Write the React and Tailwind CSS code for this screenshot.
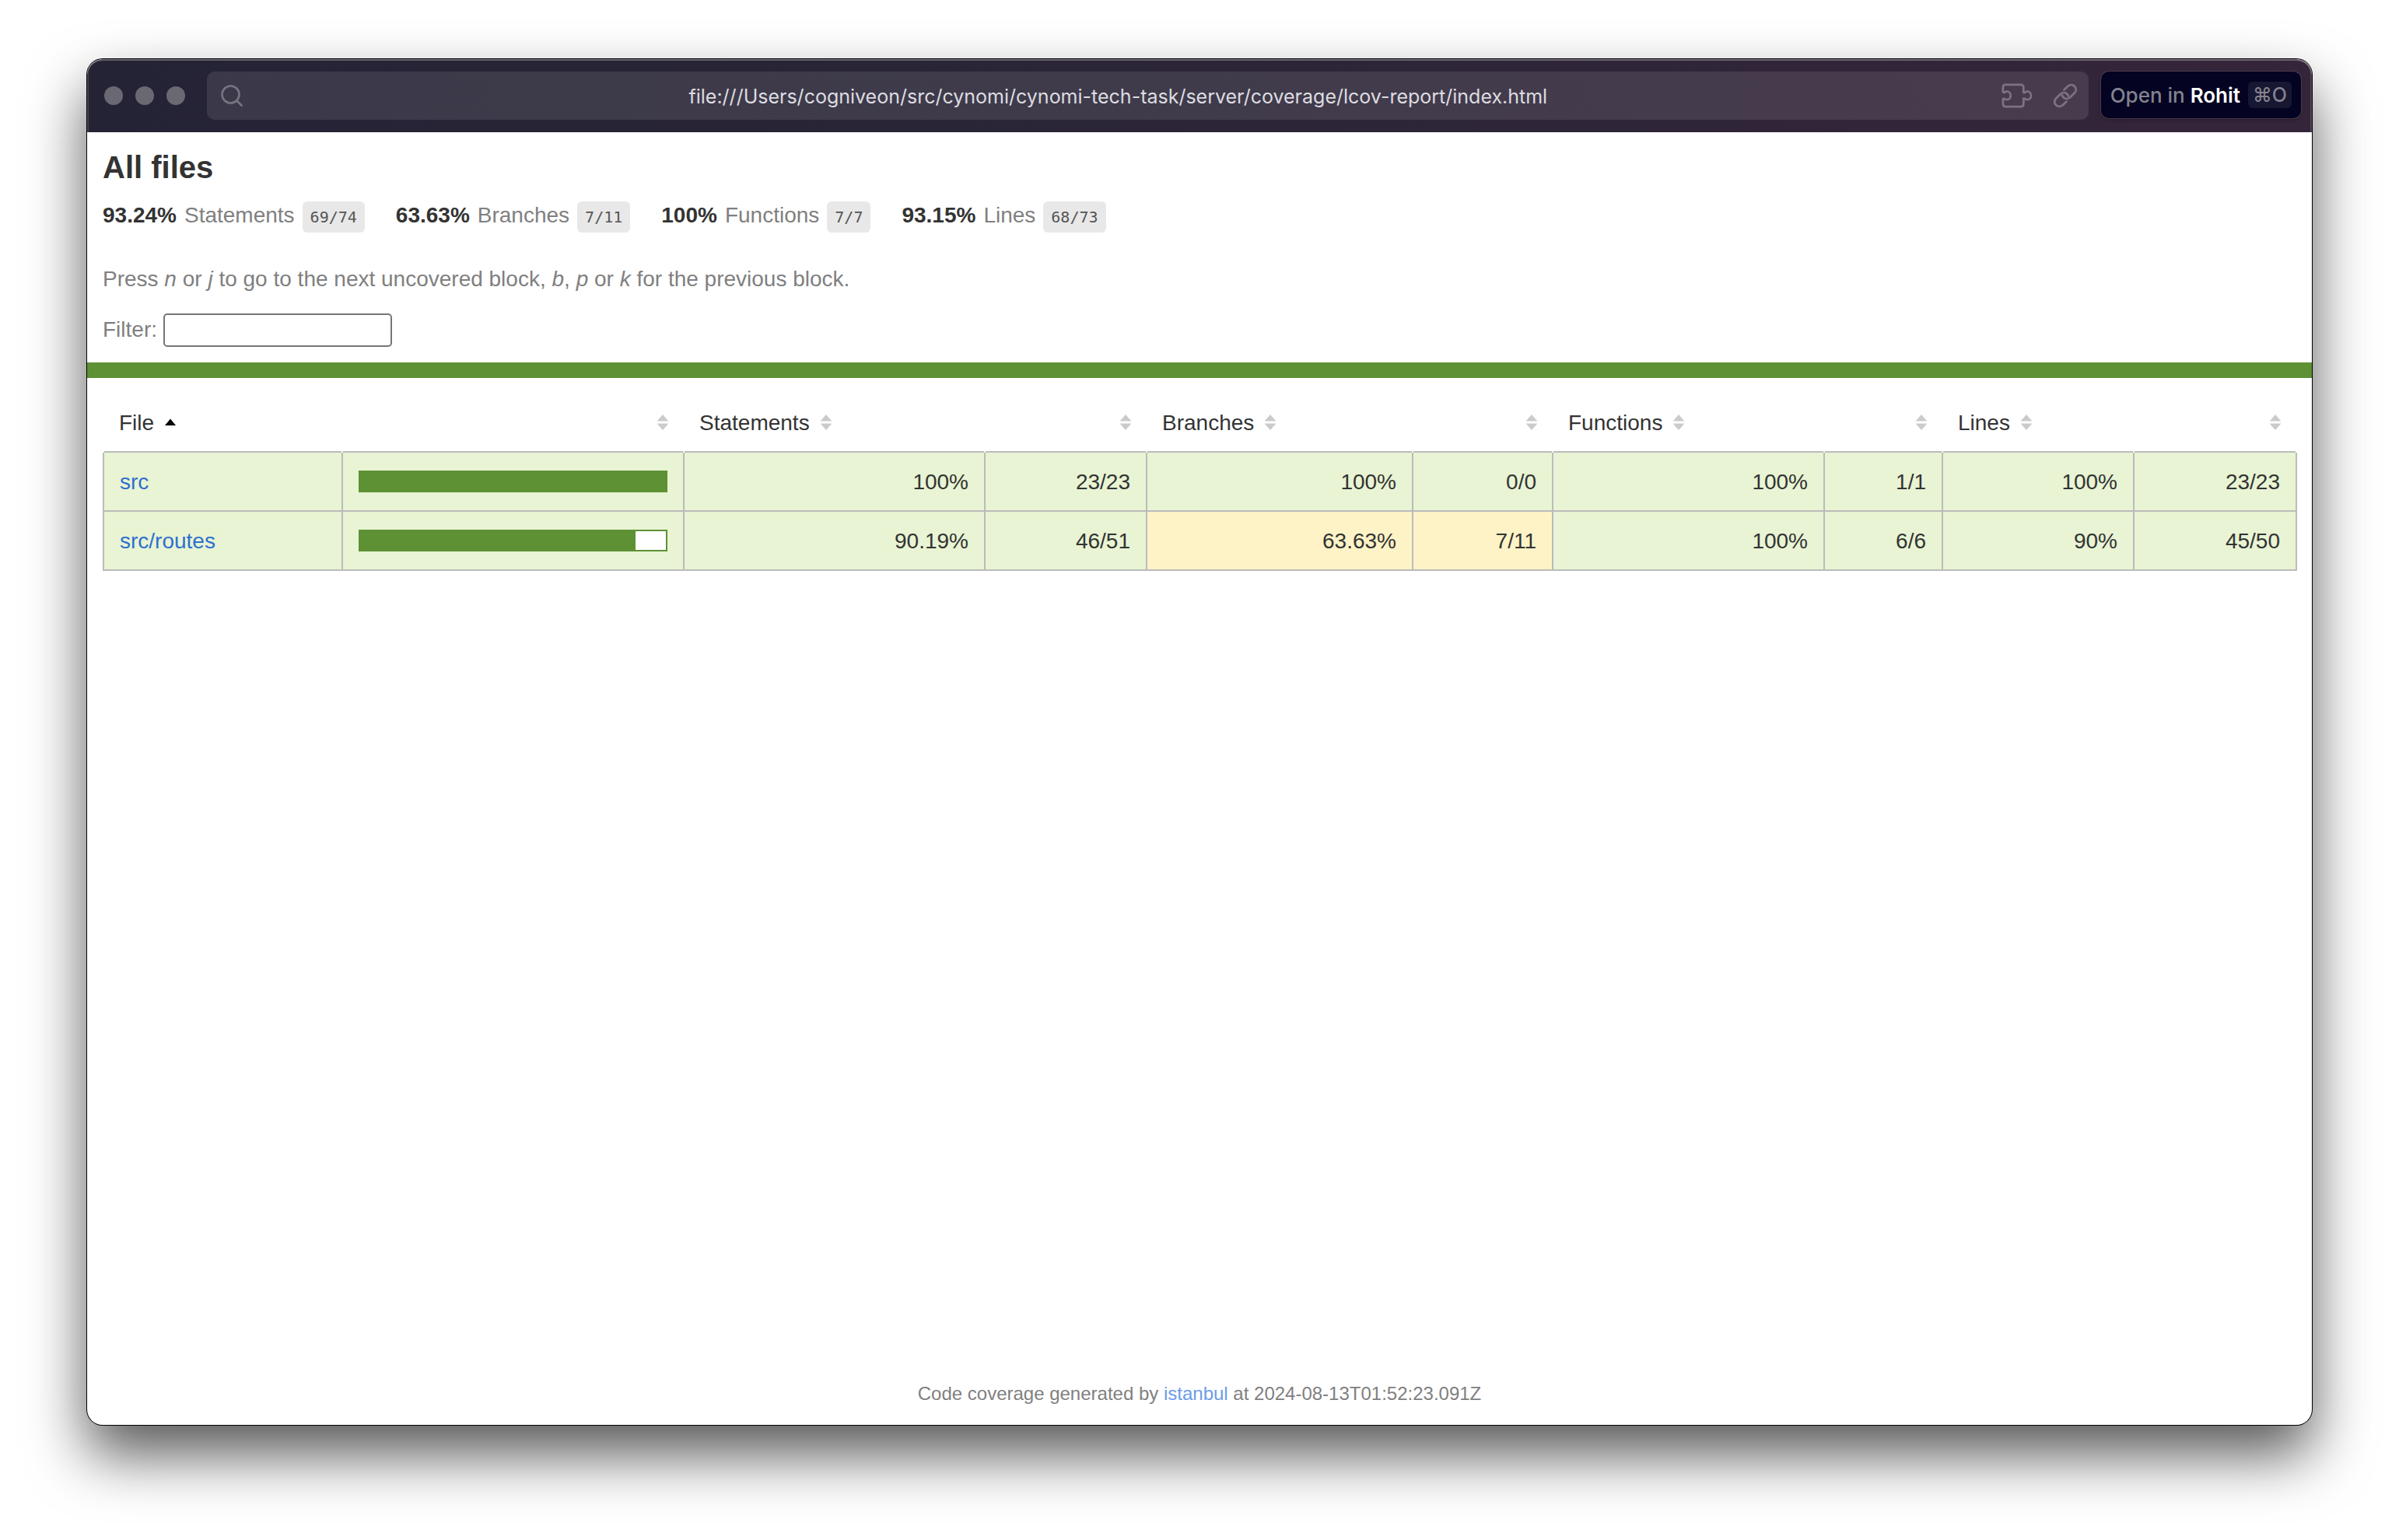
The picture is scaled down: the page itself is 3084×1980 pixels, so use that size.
const HIGH = "bg-[#e8f4d3]";
const MEDIUM = "bg-[#fdf3c6]";

const summary = [
  { pct: "93.24%", label: "Statements", fraction: "69/74" },
  { pct: "63.63%", label: "Branches", fraction: "7/11" },
  { pct: "100%", label: "Functions", fraction: "7/7" },
  { pct: "93.15%", label: "Lines", fraction: "68/73" },
];

const headers = ["File", "", "Statements", "", "Branches", "", "Functions", "", "Lines", ""];

const columns = [
  "w-[307px]",
  "w-[439px]",
  "w-[387px]",
  "w-[208px]",
  "w-[342px]",
  "w-[180px]",
  "w-[349px]",
  "w-[152px]",
  "w-[246px]",
  "w-[209px]",
];

const rows = [
  {
    name: "src",
    covered: 100,
    cells: [
      ["100%", HIGH], ["23/23", HIGH], ["100%", HIGH], ["0/0", HIGH],
      ["100%", HIGH], ["1/1", HIGH], ["100%", HIGH], ["23/23", HIGH],
    ],
  },
  {
    name: "src/routes",
    covered: 90,
    cells: [
      ["90.19%", HIGH], ["46/51", HIGH], ["63.63%", MEDIUM], ["7/11", MEDIUM],
      ["100%", HIGH], ["6/6", HIGH], ["90%", HIGH], ["45/50", HIGH],
    ],
  },
];

function SearchIcon() {
  return (
    <svg className="size-7 shrink-0 text-[#777582]" viewBox="0 0 28 28" fill="none" stroke="currentColor" strokeWidth="2.6" strokeLinecap="round" aria-hidden="true">
      <circle cx="12.5" cy="12.5" r="11" />
      <path d="M20.5 20.5 26.5 26.5" />
    </svg>
  );
}

function PuzzleIcon() {
  return (
    <svg className="h-8 w-10" viewBox="0 0 40 32" fill="none" stroke="currentColor" strokeWidth="2.8" strokeLinecap="round" strokeLinejoin="round" aria-hidden="true">
      <path d="M1.9 11V5.2Q1.9 1.9 5.2 1.9H25Q28.3 1.9 28.3 5.2V12.2H29.8C30.6 11.2 31.8 10.7 33.2 10.7C36 10.7 38 13 38 15.9C38 18.8 36 21.1 33.2 21.1C31.8 21.1 30.6 20.6 29.8 19.6H28.3V26.8Q28.3 30.1 25 30.1H5.2Q1.9 30.1 1.9 26.8V20.3L3.4 19.7C4.4 20.7 5.6 21.1 6.9 21.1C9.7 21.1 11.7 18.8 11.7 15.9C11.7 13 9.7 10.7 6.9 10.7C5.6 10.7 4.4 11.1 3.4 12.1Z" />
    </svg>
  );
}

function LinkIcon() {
  return (
    <svg className="size-8" viewBox="0 0 32 32" fill="none" stroke="currentColor" strokeWidth="2.8" strokeLinecap="round" strokeLinejoin="round" aria-hidden="true">
      <path d="M14.5 8.4 18.8 4.2C21.7 1.4 25.6 1.5 28 3.9C30.4 6.3 30.5 10 27.7 12.8L22.6 17.8C19.8 20.6 15.9 20.5 13.5 18.1C12.8 17.4 12.3 16.5 12.1 15.6" />
      <path d="M17.5 23.6 13.2 27.8C10.3 30.6 6.4 30.5 4 28.1C1.6 25.7 1.5 22 4.3 19.2L9.4 14.2C12.2 11.4 16.1 11.5 18.5 13.9C19.2 14.6 19.7 15.5 19.9 16.4" />
    </svg>
  );
}

function SortIcon({ sorted }) {
  return (
    <svg className="block h-5 w-3.5" viewBox="0 0 14 20" aria-hidden="true">
      {sorted ? (
        <path d="M7 5.5 14 14H0Z" fill="#000" />
      ) : (
        <>
          <path d="M7 0 14 8H0ZM7 20 14 12H0Z" fill="#cbcbcb" />
          <path d="M0 8H14V9H0ZM0 11H14V12H0Z" fill="#e6e6e6" />
        </>
      )}
    </svg>
  );
}

function TitleBar() {
  return (
    <header className="flex h-[94px] shrink-0 items-start rounded-t-[20px] bg-linear-to-r from-[#242335] via-[#2b2537] to-[#35253a] pt-4 pr-3.5 pl-[22px] font-[Inter,sans-serif] text-[26px] shadow-[inset_0_2px_0_rgba(255,255,255,0.3),inset_2px_0_0_rgba(255,255,255,0.15),inset_-2px_0_0_rgba(255,255,255,0.15)]">
      <div className="flex h-[62px] items-center gap-4">
        <span className="size-6 rounded-full bg-[#6a6973]" />
        <span className="size-6 rounded-full bg-[#6a6973]" />
        <span className="size-6 rounded-full bg-[#6a6973]" />
      </div>
      <div className="ml-7 flex h-[62px] min-w-0 flex-1 items-center rounded-[10px] bg-white/10 pr-3.5 pl-[18px]">
        <SearchIcon />
        <span className="flex-1 truncate pt-0.5 pr-2.5 text-center text-[25px] text-[#dddce0]">
          file:///Users/cogniveon/src/cynomi/cynomi-tech-task/server/coverage/lcov-report/index.html
        </span>
        <div className="flex items-center gap-[26px] text-[#7b7380]">
          <button type="button" aria-label="Extensions"><PuzzleIcon /></button>
          <button type="button" aria-label="Copy link"><LinkIcon /></button>
        </div>
      </div>
      <button type="button" className="ml-4 flex h-[60px] items-center rounded-[10px] bg-[#040322] px-3 font-medium whitespace-nowrap text-[#83828f] shadow-[0_0_0_1px_rgba(255,255,255,0.12),0_2px_4px_rgba(0,0,0,0.3)]">
        <span className="pt-px">Open in <span className="font-semibold text-white">Rohit</span></span>
        <kbd className="ml-2.5 flex h-[34px] w-14 items-center justify-center rounded-md bg-[#181732] font-[Inter,'DejaVu_Sans',sans-serif] text-[25px]">⌘O</kbd>
      </button>
    </header>
  );
}

export default function App() {
  return (
    <div className="flex min-h-screen flex-col bg-white px-28 pt-[76px] pb-[148px] font-['Liberation_Sans',Arial,sans-serif] text-[28px] leading-10 text-[#333]">
      <div className="flex flex-1 flex-col rounded-[20px] bg-white shadow-[0_0_0_1px_#000,0_38px_76px_rgba(0,0,0,0.66)]">
        <TitleBar />
        <main className="flex flex-1 flex-col">
          <section className="p-5">
            <h1 className="text-[40px] leading-[50px] font-bold">All files</h1>
            <div className="mt-[17px] flex flex-wrap gap-10">
              {summary.map((s) => (
                <div key={s.label} className="flex gap-2.5">
                  <strong>{s.pct}</strong>
                  <span className="text-[#808080]">{s.label}</span>
                  <span className="mt-0.5 h-10 rounded-md bg-[#e8e8e8] px-2.5 font-['DejaVu_Sans_Mono',monospace] text-xl leading-10 text-[#555]">{s.fraction}</span>
                </div>
              ))}
            </div>
            <p className="mt-10 text-[#808080]">
              Press <em>n</em> or <em>j</em> to go to the next uncovered block, <em>b</em>, <em>p</em> or <em>k</em> for the previous block.
            </p>
            <div className="mt-6 flex items-start gap-2 text-[#808080]">
              <label htmlFor="filter" className="pt-px">Filter:</label>
              <input id="filter" type="search" className="h-[43px] w-[294px] rounded-[5px] border-2 border-[#767676] bg-white px-1 text-[26px] outline-none" />
            </div>
          </section>
          <div className="h-5 bg-[#5d9134]" />
          <section className="p-5">
            <table className="w-full table-fixed border-collapse">
              <colgroup>
                {columns.map((c, i) => (
                  <col key={i} className={c} />
                ))}
              </colgroup>
              <thead>
                <tr className="h-[75px]">
                  {headers.map((h, i) => (
                    <th key={i} scope="col" className="border-x-2 border-transparent px-[19px] font-normal whitespace-nowrap">
                      <button type="button" aria-label={h ? undefined : "Sort"} className={h ? "flex items-center gap-3.5" : "ml-auto flex items-center"}>
                        {h && <span className="pt-0.5">{h}</span>}
                        <SortIcon sorted={h === "File"} />
                      </button>
                    </th>
                  ))}
                </tr>
              </thead>
              <tbody>
                {rows.map((r) => (
                  <tr key={r.name} className="h-[76px]">
                    <td className="border-2 border-[#bbb] bg-[#e8f4d3] px-5 pt-0.5">
                      <a href="#" className="text-[#2f6fd0]">{r.name}</a>
                    </td>
                    <td className="border-2 border-[#bbb] bg-[#e8f4d3] px-5">
                      <div className="h-7 border-2 border-[#5d9134] bg-white">
                        <div className="h-full bg-[#5d9134]" style={{ width: `${r.covered}%` }} />
                      </div>
                    </td>
                    {r.cells.map(([value, tone], i) => (
                      <td key={i} className={`border-2 border-[#bbb] px-5 pt-0.5 text-right whitespace-nowrap ${tone}`}>{value}</td>
                    ))}
                  </tr>
                ))}
              </tbody>
            </table>
          </section>
          <footer className="mt-auto pb-5 text-center text-2xl leading-10 text-[#808080]">
            Code coverage generated by <a href="#" className="text-[#6b9ce8]">istanbul</a> at 2024-08-13T01:52:23.091Z
          </footer>
        </main>
      </div>
    </div>
  );
}
